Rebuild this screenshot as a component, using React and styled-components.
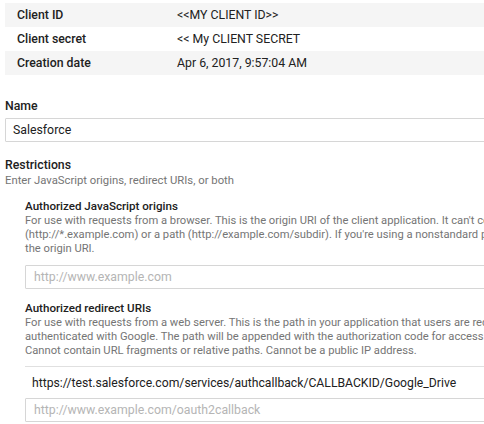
import styled, { createGlobalStyle } from 'styled-components';

const GlobalStyle = createGlobalStyle`
	html, body {
		margin: 0;
		padding: 0;
		background: #fff;
		overflow: hidden;
	}
	body {
		font-family: Roboto, 'Liberation Sans', Arial, sans-serif;
		color: #212121;
	}
`;

const details = [
	{ label: 'Client ID', value: '<<MY CLIENT ID>>' },
	{ label: 'Client secret', value: '<< My CLIENT SECRET' },
	{ label: 'Creation date', value: 'Apr 6, 2017, 9:57:04 AM' },
];

const App = () => {
	return (
		<>
			<GlobalStyle />
			<StyledPage>
				<StyledTable>
					{details.map((row, i) => (
						<StyledRow key={row.label} $shaded={i % 2 === 0}>
							<StyledKey>{row.label}</StyledKey>
							<StyledValue>{row.value}</StyledValue>
						</StyledRow>
					))}
				</StyledTable>

				<StyledField>
					<StyledLabel>Name</StyledLabel>
					<StyledInput defaultValue='Salesforce' />
				</StyledField>

				<StyledSection>
					<StyledLabel>Restrictions</StyledLabel>
					<StyledHint>Enter JavaScript origins, redirect URIs, or both</StyledHint>

					<StyledGroup>
						<StyledSubLabel>Authorized JavaScript origins</StyledSubLabel>
						<StyledDesc>
							For use with requests from a browser. This is the origin URI of the client application. It can't contain a wildcard
							<br />
							(http://*.example.com) or a path (http://example.com/subdir). If you're using a nonstandard port, you must include it in
							<br />
							the origin URI.
						</StyledDesc>
						<StyledInput $inset placeholder='http://www.example.com' />
					</StyledGroup>

					<StyledGroup>
						<StyledSubLabel>Authorized redirect URIs</StyledSubLabel>
						<StyledDesc>
							For use with requests from a web server. This is the path in your application that users are redirected to after they have
							<br />
							authenticated with Google. The path will be appended with the authorization code for access. Must have a protocol.
							<br />
							Cannot contain URL fragments or relative paths. Cannot be a public IP address.
						</StyledDesc>
						<StyledUriList>
							<StyledUri>https://test.salesforce.com/services/authcallback/CALLBACKID/Google_Drive</StyledUri>
						</StyledUriList>
						<StyledInput $inset placeholder='http://www.example.com/oauth2callback' />
					</StyledGroup>
				</StyledSection>
			</StyledPage>
		</>
	);
};

export default App;

const StyledPage = styled.div`
	width: 640px;
	padding: 3px 0 0 5px;
	box-sizing: border-box;
`;
const StyledTable = styled.div`
	display: flex;
	flex-direction: column;
`;
const StyledRow = styled.div`
	display: flex;
	align-items: center;
	height: 24px;
	padding-left: 12px;
	background: ${({ $shaded }) => ($shaded ? '#f5f5f5' : '#fff')};
	font-size: 12.3px;
`;
const StyledKey = styled.div`
	width: 160px;
	font-weight: 500;
	color: #212121;
`;
const StyledValue = styled.div`
	color: #212121;
`;
const StyledField = styled.div`
	margin-top: 23px;
	display: flex;
	flex-direction: column;
`;
const StyledLabel = styled.div`
	font-size: 12.3px;
	font-weight: 500;
	line-height: 16px;
	color: #212121;
	margin-bottom: 4px;
`;
const StyledInput = styled.input`
	display: block;
	box-sizing: border-box;
	width: 100%;
	height: 24px;
	margin: 0;
	padding: 0 0 0 ${({ $inset }) => ($inset ? '8px' : '7px')};
	border: 1px solid #d6d6d6;
	border-radius: 1px;
	font-family: Roboto, 'Liberation Sans', Arial, sans-serif;
	font-size: 12.3px;
	color: #212121;
	outline: none;
	&::placeholder {
		color: #b5b5b5;
	}
`;
const StyledSection = styled.div`
	margin-top: 15px;
`;
const StyledHint = styled.div`
	font-size: 11.3px;
	line-height: 16px;
	color: #757575;
	margin-top: -4px;
`;
const StyledGroup = styled.div`
	padding-left: 20px;
	margin-top: 10px;
	& + & {
		margin-top: 12px;
	}
`;
const StyledSubLabel = styled.div`
	font-size: 11.6px;
	font-weight: 500;
	line-height: 15px;
	color: #212121;
`;
const StyledDesc = styled.div`
	font-size: 11.2px;
	line-height: 14px;
	color: #757575;
	white-space: nowrap;
	margin-bottom: 9px;
`;
const StyledUriList = styled.div`
	border-top: 1px solid #e0e0e0;
	margin-top: -1px;
	margin-bottom: 5px;
`;
const StyledUri = styled.div`
	padding: 6px 0 0 7px;
	height: 26px;
	box-sizing: border-box;
	font-size: 12.2px;
	line-height: 20px;
	color: #212121;
`;
